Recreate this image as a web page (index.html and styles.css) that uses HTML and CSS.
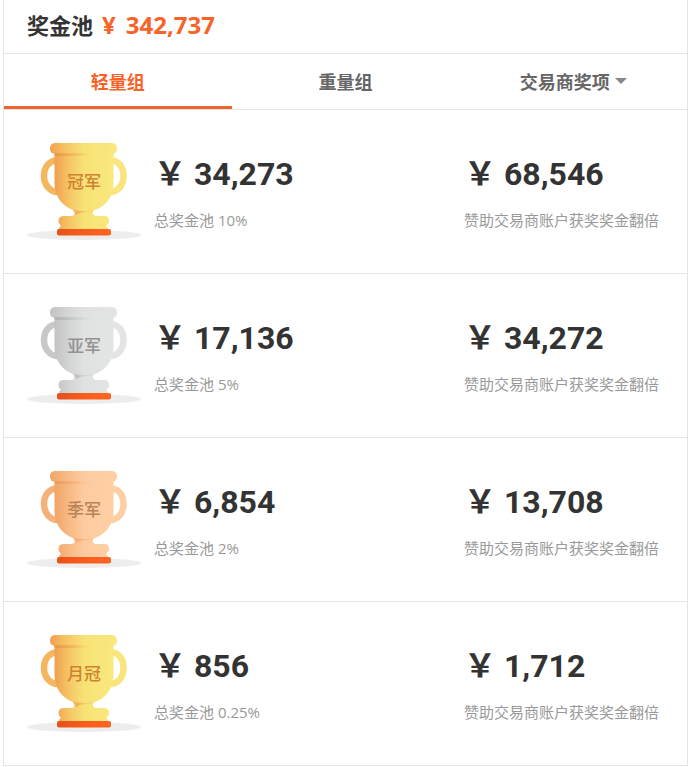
FILE: index.html
```html
<!DOCTYPE html>
<html lang="zh-CN">
<head>
<meta charset="utf-8">
<meta name="viewport" content="width=device-width, initial-scale=1">
<title>奖金池</title>
<link rel="stylesheet" href="styles.css">
</head>
<body>
<svg class="defs" aria-hidden="true">
  <defs>
    <linearGradient id="gold" x1="0" x2="1"><stop offset="0" stop-color="#f0a050"/><stop offset=".22" stop-color="#f5c263"/><stop offset=".5" stop-color="#f8e276"/><stop offset="1" stop-color="#f9e87c"/></linearGradient>
    <linearGradient id="silver" x1="0" x2="1"><stop offset="0" stop-color="#c2c2c2"/><stop offset=".25" stop-color="#d3d4d4"/><stop offset=".5" stop-color="#e0e1e1"/><stop offset="1" stop-color="#e3e4e4"/></linearGradient>
    <linearGradient id="bronze" x1="0" x2="1"><stop offset="0" stop-color="#f0a466"/><stop offset=".25" stop-color="#f8ba85"/><stop offset=".5" stop-color="#fecb9f"/><stop offset="1" stop-color="#ffcfa4"/></linearGradient>
    <linearGradient id="shade-gold" x1="0" x2="1"><stop offset="0" stop-color="#e98b38" stop-opacity=".6"/><stop offset="1" stop-color="#e98b38" stop-opacity="0"/></linearGradient>
    <linearGradient id="shade-silver" x1="0" x2="1"><stop offset="0" stop-color="#999" stop-opacity=".45"/><stop offset="1" stop-color="#999" stop-opacity="0"/></linearGradient>
    <linearGradient id="shade-bronze" x1="0" x2="1"><stop offset="0" stop-color="#e98b48" stop-opacity=".5"/><stop offset="1" stop-color="#e98b48" stop-opacity="0"/></linearGradient>
    <linearGradient id="foot" x1="0" x2="1"><stop offset="0" stop-color="#e4521c"/><stop offset=".5" stop-color="#fa5c1c"/><stop offset="1" stop-color="#ff6423"/></linearGradient>
    <g id="handle-left"><path d="M30 19.500C22 19.500 17 26.500 17 35C17 44 23 51 31 51" fill="none" stroke-width="6.500"/></g>
    <g id="handle-right"><path d="M84 19.500C92 19.500 96.500 26.500 96.500 35C96.500 44 91 51 83 51" fill="none" stroke-width="6.500"/></g>
    <path id="cup" d="M27.500 10H86.500V42C86.500 55 79 65 68 69C65 70 65 73 68 75H77Q82 75 82 80Q82 83 79 84.500Q81 86 81 88H32Q32 86 34 84.500Q31.500 83 31.500 80Q31.500 75 37 75H45C50 73 50 70 46 69C35 65 27.500 55 27.500 42Z"/>
    <rect id="rim" x="23" y="2" width="67" height="11" rx="5"/>
    <rect id="rim-shade" x="27.500" y="12" width="36" height="3" rx="1"/>
    <path id="neck-shade" d="M46 68.500Q57 71.500 68 68.500L66 71Q57 70 48 74Z"/>
  </defs>
</svg>

<main class="pool">
  <header class="pool-header">
    <h1 class="pool-title">奖金池</h1>
    <span class="pool-total"><span>¥</span><span>342,737</span></span>
  </header>

  <nav class="tabs">
    <button class="tab active" type="button">轻量组</button>
    <button class="tab" type="button">重量组</button>
    <button class="tab" type="button" aria-haspopup="true">交易商奖项<span class="caret"></span></button>
  </nav>

  <section class="prize">
    <svg class="trophy" viewBox="0 0 114 100">
      <ellipse class="ground" cx="57" cy="94" rx="57" ry="5"/>
      <use href="#handle-left" stroke="#f4b75f"/><use href="#handle-right" stroke="#f9e57d"/>
      <use href="#cup" fill="url(#gold)"/><use href="#rim" fill="url(#gold)"/>
      <use href="#rim-shade" fill="url(#shade-gold)"/><use href="#neck-shade" fill="url(#shade-gold)"/>
      <rect x="30" y="88" width="54" height="6.500" rx="2" fill="url(#foot)"/>
      <text class="rank gold" x="57" y="47">冠军</text>
    </svg>
    <div class="detail"><strong class="amount">￥ 34,273</strong><span class="note">总奖金池 10%</span></div>
    <div class="detail"><strong class="amount">￥ 68,546</strong><span class="note">赞助交易商账户获奖奖金翻倍</span></div>
  </section>

  <section class="prize">
    <svg class="trophy" viewBox="0 0 114 100">
      <ellipse class="ground" cx="57" cy="94" rx="57" ry="5"/>
      <use href="#handle-left" stroke="#c8c8c8"/><use href="#handle-right" stroke="#e3e4e4"/>
      <use href="#cup" fill="url(#silver)"/><use href="#rim" fill="url(#silver)"/>
      <use href="#rim-shade" fill="url(#shade-silver)"/><use href="#neck-shade" fill="url(#shade-silver)"/>
      <rect x="30" y="88" width="54" height="6.500" rx="2" fill="url(#foot)"/>
      <text class="rank silver" x="57" y="47">亚军</text>
    </svg>
    <div class="detail"><strong class="amount">￥ 17,136</strong><span class="note">总奖金池 5%</span></div>
    <div class="detail"><strong class="amount">￥ 34,272</strong><span class="note">赞助交易商账户获奖奖金翻倍</span></div>
  </section>

  <section class="prize">
    <svg class="trophy" viewBox="0 0 114 100">
      <ellipse class="ground" cx="57" cy="94" rx="57" ry="5"/>
      <use href="#handle-left" stroke="#f5b17a"/><use href="#handle-right" stroke="#ffcfa4"/>
      <use href="#cup" fill="url(#bronze)"/><use href="#rim" fill="url(#bronze)"/>
      <use href="#rim-shade" fill="url(#shade-bronze)"/><use href="#neck-shade" fill="url(#shade-bronze)"/>
      <rect x="30" y="88" width="54" height="6.500" rx="2" fill="url(#foot)"/>
      <text class="rank bronze" x="57" y="47">季军</text>
    </svg>
    <div class="detail"><strong class="amount">￥ 6,854</strong><span class="note">总奖金池 2%</span></div>
    <div class="detail"><strong class="amount">￥ 13,708</strong><span class="note">赞助交易商账户获奖奖金翻倍</span></div>
  </section>

  <section class="prize">
    <svg class="trophy" viewBox="0 0 114 100">
      <ellipse class="ground" cx="57" cy="94" rx="57" ry="5"/>
      <use href="#handle-left" stroke="#f4b75f"/><use href="#handle-right" stroke="#f9e57d"/>
      <use href="#cup" fill="url(#gold)"/><use href="#rim" fill="url(#gold)"/>
      <use href="#rim-shade" fill="url(#shade-gold)"/><use href="#neck-shade" fill="url(#shade-gold)"/>
      <rect x="30" y="88" width="54" height="6.500" rx="2" fill="url(#foot)"/>
      <text class="rank gold" x="57" y="47">月冠</text>
    </svg>
    <div class="detail"><strong class="amount">￥ 856</strong><span class="note">总奖金池 0.25%</span></div>
    <div class="detail"><strong class="amount">￥ 1,712</strong><span class="note">赞助交易商账户获奖奖金翻倍</span></div>
  </section>
</main>
</body>
</html>
```
FILE: styles.css
```css
* {
  box-sizing: border-box;
}

body {
  margin: 0;
  background: #fff;
  color: #333;
  font-family: "Open Sans", "Noto Sans CJK SC", sans-serif;
}

.defs {
  position: absolute;
  width: 0;
  height: 0;
}

.pool {
  margin: 0 2px 0 3px;
  border: solid #e4e4e4;
  border-width: 0 1px;
}

.pool-header {
  display: flex;
  align-items: center;
  gap: 9px;
  height: 54px;
  padding: 0 23px 3px;
  border-bottom: 1px solid #e4e4e4;
}

.pool-title {
  margin: 0;
  font-size: 22px;
  line-height: 32px;
}

.pool-total {
  display: flex;
  gap: 10px;
  color: #f96327;
  font-size: 24px;
  font-weight: 700;
  line-height: 32px;
}

.tabs {
  display: grid;
  grid-template-columns: repeat(3, 1fr);
  height: 56px;
  border-bottom: 1px solid #e4e4e4;
}

.tab {
  display: flex;
  align-items: center;
  justify-content: center;
  gap: 5px;
  padding: 1px 0 0;
  border: 0;
  border-bottom: 3px solid transparent;
  background: none;
  color: #666;
  font: inherit;
  font-size: 18px;
  font-weight: 700;
  cursor: pointer;
}

.tab.active {
  border-color: #f1642f;
  color: #f96327;
}

.caret {
  border: solid transparent;
  border-width: 6px 6px 0;
  border-top-color: #888;
}

.prize {
  display: grid;
  grid-template-columns: 114px 1fr 200px;
  column-gap: 13px;
  align-items: center;
  padding: 31px 23px 32px;
  border-bottom: 1px solid #e4e4e4;
}

.trophy {
  display: block;
  width: 114px;
  height: 100px;
}

.ground {
  fill: #ededed;
}

.rank {
  font-family: "Noto Sans CJK SC", sans-serif;
  font-size: 17px;
  font-weight: 500;
  text-anchor: middle;
}

.rank.gold {
  fill: #cf8230;
}

.rank.silver {
  fill: #929292;
}

.rank.bronze {
  fill: #b98259;
}

.detail {
  display: flex;
  flex-direction: column;
  gap: 14px;
  padding-top: 3px;
  white-space: nowrap;
}

.amount {
  font-family: Roboto, "Noto Sans CJK SC", sans-serif;
  font-size: 32px;
  line-height: 40px;
}

.note {
  color: #999;
  font-size: 15px;
  line-height: 24px;
}
```
